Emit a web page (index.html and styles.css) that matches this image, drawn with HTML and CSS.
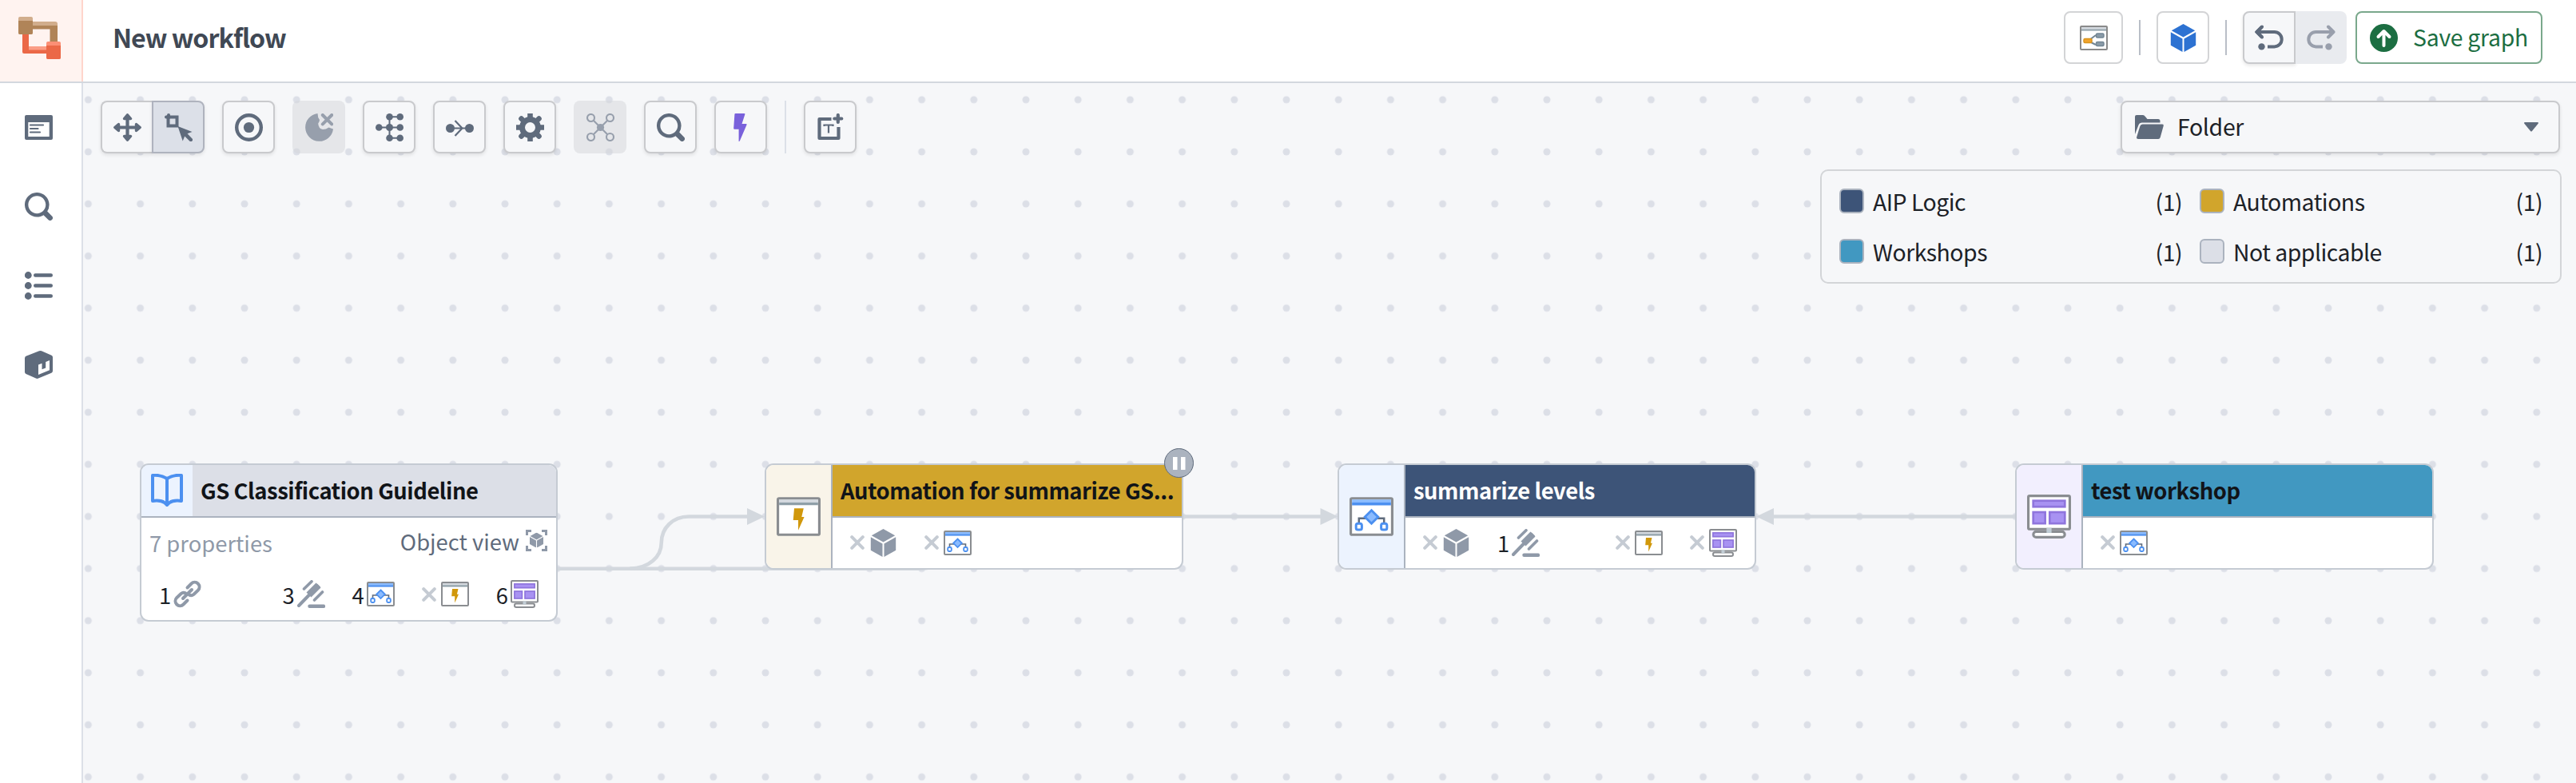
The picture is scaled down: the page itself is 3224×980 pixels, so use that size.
FILE: index.html
```html
<!DOCTYPE html>
<html lang="en">

<head>
    <meta charset="UTF-8">
    <meta name="viewport" content="width=device-width, initial-scale=1.0">
    <title>New workflow</title>
    <link rel="stylesheet" href="styles.css">
</head>

<body>
    <!-- icon sprite -->
    <svg class="sprite" width="0" height="0">
        <symbol id="i-search" viewBox="0 0 16 16">
            <path d="M15.55 13.43l-2.67-2.68a6.94 6.94 0 001.11-3.76c0-3.87-3.13-7-7-7s-7 3.13-7 7 3.13 7 7 7c1.39 0 2.68-.42 3.76-1.11l2.68 2.67a1.498 1.498 0 102.12-2.12zm-8.56-1.44c-2.76 0-5-2.24-5-5s2.24-5 5-5 5 2.24 5 5-2.24 5-5 5z"/>
        </symbol>
        <symbol id="i-cube" viewBox="0 0 35 35">
            <path d="M17.5 0L32.2 8.2 17.5 16.6 2.8 8.2z"/>
            <path d="M1.8 10.2L16.5 18.6V35L1.8 26.8z"/>
            <path d="M33.2 10.2L18.5 18.6V35l14.7-8.2z"/>
        </symbol>
        <symbol id="i-x" viewBox="0 0 18 18">
            <path d="M2.2 2.2l13.6 13.6M15.8 2.2L2.2 15.8" fill="none" stroke="#c5cbd3" stroke-width="4" stroke-linecap="round"/>
        </symbol>
        <symbol id="i-gavel" viewBox="0 0 35 35">
            <g fill="none" stroke="#8f99a8" stroke-linecap="round">
                <path d="M2 32L17 16.500" stroke-width="4"/>
                <path d="M8.500 11L18 1.800M21.500 25L31.500 15" stroke-width="3.600"/>
                <path d="M15.500 32.800H33" stroke-width="4.400"/>
                <path d="M17.500 15.500L23.500 9.500" stroke-width="8.500" stroke-linecap="square"/>
                <path d="M24.500 6l3 3" stroke-width="3"/>
            </g>
        </symbol>
        <symbol id="i-link" viewBox="0 0 35 35">
            <g fill="none" stroke="#8f99a8" stroke-width="4" stroke-linecap="round">
                <path d="M17.500 9.500l5-5a5.800 5.800 0 0 1 8.300 8.300l-5.400 5.200q-2.500 2-5.500.6"/>
                <path d="M17.500 25.500l-5 5a5.800 5.800 0 0 1-8.300-8.300l5.400-5.200q2.500-2 5.500-.6"/>
                <path d="M12 23L23 12"/>
            </g>
        </symbol>
        <symbol id="i-logic" viewBox="0 0 35 31">
            <rect x="1" y="1" width="33" height="29" rx="1" fill="#fff" stroke="#8a8d91" stroke-width="2"/>
            <path d="M2 2h31v2.500H2z" fill="#8abbff"/>
            <path d="M2 4.300h31v2.300H2z" fill="#4c90f0"/>
            <path d="M7.500 21v-4h20v4" fill="none" stroke="#5f6b7c" stroke-width="1.600"/>
            <path d="M17.500 10.500l5.300 5.300-5.300 5.300-5.300-5.300z" fill="#8abbff" stroke="#4c90f0" stroke-width="1.800"/>
            <rect x="5.200" y="21" width="4.600" height="5" rx="1.500" fill="#fff" stroke="#4c90f0" stroke-width="1.900"/>
            <rect x="25.200" y="21" width="4.600" height="5" rx="1.500" fill="#fff" stroke="#4c90f0" stroke-width="1.900"/>
        </symbol>
        <symbol id="i-auto" viewBox="0 0 35 31">
            <rect x="1" y="1" width="33" height="29" rx="1" fill="#fff" stroke="#8a8d91" stroke-width="2"/>
            <path d="M2 2h31v2.500H2z" fill="#d3d8de"/>
            <path d="M2 4.300h31v2.200H2z" fill="#8f9fa8"/>
            <path d="M14 9h7.500l-1.600 6.800h2.100l-4.800 10.700v-8.200h-4z" fill="#d1980b"/>
        </symbol>
        <symbol id="i-shop" viewBox="0 0 35 35">
            <rect x="5" y="29.500" width="25" height="4.500" rx="2.200" fill="#fff" stroke="#8a8d91" stroke-width="2"/>
            <rect x="1" y="1" width="33" height="26.500" rx="1" fill="#fff" stroke="#8a8d91" stroke-width="2"/>
            <path d="M15.500 26.500h4v4h-4z" fill="#c1cdd5"/>
            <g fill="#a892f2" stroke="#8f75dd" stroke-width="1.700">
                <rect x="4.900" y="4.900" width="25.200" height="4.800"/>
                <rect x="4.900" y="14" width="9.500" height="9"/>
                <rect x="18" y="14" width="12.100" height="9"/>
            </g>
        </symbol>
    </svg>

    <header class="header">
        <div class="logo">
            <svg width="54" height="54" viewBox="0 0 54 54">
                <path d="M5 20h8v26H7a2 2 0 0 1-2-2z" fill="#eb6847"/>
                <path d="M13 37h24v5H13z" fill="#fb9d86"/>
                <path d="M7 41.500h30V46H7z" fill="#eb6847"/>
                <path d="M17 6h29a3 3 0 0 1 3 3v3H17z" fill="#d1ad8c"/>
                <path d="M17 11h32v26h-9.500V15.500H17z" fill="#b08458"/>
                <rect width="18" height="22" rx="2" fill="#d1ad8c"/>
                <path d="M0 5h18v15a2 2 0 0 1-2 2H2a2 2 0 0 1-2-2z" fill="#b08458"/>
                <rect x="35" y="31" width="18" height="22" rx="2" fill="#fb8f75"/>
                <path d="M35 36h18v15a2 2 0 0 1-2 2H37a2 2 0 0 1-2-2z" fill="#eb6847"/>
            </svg>
        </div>
        <h1 class="title">New workflow</h1>
        <div class="actions">
            <button class="action wide">
                <svg width="35" height="31" viewBox="0 0 35 31">
                    <rect x="1" y="1" width="33" height="29" rx="1" fill="#fff" stroke="#8a8a8a" stroke-width="2"/>
                    <path d="M2 2h31v2.500H2z" fill="#d3d8de"/>
                    <path d="M2 4.500h31v2H2z" fill="#8f9fa8"/>
                    <path d="M12 18l8-6M12 20l8 4" stroke="#738694" stroke-width="2"/>
                    <rect x="20.500" y="10" width="9.500" height="5" rx="1.500" fill="#8a9ba8" stroke="#738694" stroke-width="1.500"/>
                    <rect x="20.500" y="20.500" width="9.500" height="5" rx="1.500" fill="#8a9ba8" stroke="#738694" stroke-width="1.500"/>
                    <rect x="5" y="16.500" width="10" height="5" rx="1.500" fill="#f2a42b" stroke="#d9941f" stroke-width="1.500"/>
                </svg>
            </button>
            <span class="sep"></span>
            <button class="action blue"><svg width="35" height="35"><use href="#i-cube"/></svg></button>
            <span class="sep"></span>
            <div class="history">
                <button class="undo">
                    <svg width="36" height="32" viewBox="0 0 36 32">
                        <path d="M9 2.500L2.500 9 9 15.500M3 9h21.500a9.200 9.200 0 0 1 0 18.400H16" fill="none" stroke="currentColor" stroke-width="4"/>
                        <path d="M9 2.500L2.500 9 9 15.500" fill="none" stroke="currentColor" stroke-width="4" stroke-linecap="round" stroke-linejoin="round"/>
                        <circle cx="8.500" cy="27.400" r="4.200"/>
                    </svg>
                </button>
                <button class="redo">
                    <svg width="36" height="32" viewBox="0 0 36 32">
                        <path d="M33 9H11.500a9.200 9.200 0 0 0 0 18.400H20" fill="none" stroke="currentColor" stroke-width="4"/>
                        <path d="M27 2.500L33.500 9 27 15.500" fill="none" stroke="currentColor" stroke-width="4" stroke-linecap="round" stroke-linejoin="round"/>
                        <circle cx="27.500" cy="27.400" r="4.200"/>
                    </svg>
                </button>
            </div>
            <button class="save">
                <svg width="35" height="35" viewBox="0 0 35 35">
                    <circle cx="17.500" cy="17.500" r="17.500" fill="#1c6e42"/>
                    <path d="M17.500 27V9.500M10.500 16l7-7 7 7" fill="none" stroke="#fff" stroke-width="4" stroke-linecap="round" stroke-linejoin="round"/>
                </svg>
                <span>Save graph</span>
            </button>
        </div>
    </header>

    <div class="main">
        <nav class="sidebar">
            <svg width="35" height="35" viewBox="0 0 35 35">
                <path d="M2 2h31a2 2 0 0 1 2 2v27a2 2 0 0 1-2 2H2a2 2 0 0 1-2-2V4a2 2 0 0 1 2-2zm2.300 9v18h26.400V11z" fill-rule="evenodd"/>
                <path d="M7 14.500h16M7 19h9.500M7 23.500h12" stroke="#5f6b7c" stroke-width="2.200" stroke-linecap="round"/>
            </svg>
            <svg width="35" height="35"><use href="#i-search"/></svg>
            <svg width="35" height="35" viewBox="0 0 35 35">
                <circle cx="4.300" cy="4.500" r="4.400"/><circle cx="4.300" cy="17.500" r="4.400"/><circle cx="4.300" cy="30.500" r="4.400"/>
                <path d="M13.200 4.500h19.600M13.200 17.500h19.600M13.200 30.500h19.600" stroke="#5f6b7c" stroke-width="4.400" stroke-linecap="round"/>
            </svg>
            <svg width="35" height="35" viewBox="0 0 35 35">
                <path d="M18 .3q1.500-.6 3 0l12.500 5.400Q35 6.500 35 8v17q0 2-1.600 2.800L17 34.600q-1.500.6-3 0L1.500 29Q0 28 0 26.500V9.500Q0 7.500 1.500 6.800z"/>
                <path d="M17 17.500l4.500-1.800v7.600l4.700-1.900v-7.500l4.800-1.900v12.300L17 30z" fill="#fff"/>
            </svg>
        </nav>

        <div class="canvas">
            <svg class="backdrop" width="3120" height="876" viewBox="104 104 3120 876">
                <defs>
                    <pattern id="dots" x="77.800" y="92.200" width="65.200" height="65.200" patternUnits="userSpaceOnUse">
                        <circle cx="32.600" cy="32.600" r="4.500" fill="#dcdfe7"/>
                    </pattern>
                </defs>
                <rect x="104" y="104" width="3120" height="876" fill="url(#dots)"/>
                <g fill="none" stroke="#d3d8de" stroke-width="4.600">
                    <path d="M698 711.700H1150C1180 711.700 1195 690 1195 679S1210 646.500 1240 646.500H1654"/>
                    <path d="M788 711.700C812 711.700 827.800 697 827.800 679S842 646.500 862 646.500H937"/>
                    <path d="M2522 646.500H2220"/>
                </g>
                <path d="M935 636l22 10.500-22 10.500zM1652.500 636l22 10.500-22 10.500zM2220 636l-22 10.500 22 10.500z" fill="#d3d8de"/>
            </svg>

            <div class="toolbar">
                <div class="tools">
                    <div class="group">
                        <button class="tool first">
                            <svg width="35" height="35" viewBox="0 0 35 35">
                                <path d="M17.500 3v29M3 17.500h29" stroke="currentColor" stroke-width="4.200"/>
                                <path d="M17.500 1.800l4 4.700h-8zM17.500 33.200l4-4.700h-8zM1.800 17.500l4.700-4v8zM33.200 17.500l-4.700-4v8z" stroke="currentColor" stroke-width="3.400" stroke-linejoin="round"/>
                            </svg>
                        </button>
                        <button class="tool last active">
                            <svg width="35" height="35" viewBox="0 0 35 35">
                                <path d="M4.500 4.500h11v11h-11z" fill="none" stroke="currentColor" stroke-width="4"/>
                                <path d="M2 4.500h3V2" fill="none" stroke="currentColor" stroke-width="4" stroke-linecap="round"/>
                                <path d="M16.500 16l18 7-6 2.300 6 6.200a2.200 2.200 0 0 1-3 3.200l-6.300-6.200-2.500 6z"/>
                            </svg>
                        </button>
                    </div>
                    <button class="tool">
                        <svg width="35" height="35" viewBox="0 0 35 35">
                            <circle cx="17.500" cy="17.500" r="15.300" fill="none" stroke="currentColor" stroke-width="4.400"/>
                            <circle cx="17.500" cy="17.500" r="6.600"/>
                        </svg>
                    </button>
                    <button class="tool disabled">
                        <svg width="35" height="35" viewBox="0 0 35 35">
                            <path d="M15.500 0A17.500 17.500 0 1 0 35 19.500q-3-.8-5.500-2Q26 20 22 20q-5.500-1-5.800-7.500 1.800-2 1.800-4.500-2.500-3-2.500-8z"/>
                            <path d="M21.800 2l11.400 11.400M33.200 2L21.800 13.400" stroke="currentColor" stroke-width="4" stroke-linecap="round"/>
                        </svg>
                    </button>
                    <button class="tool">
                        <svg width="35" height="35" viewBox="0 0 35 35">
                            <path d="M4 17.500h27M31 4.300H17.500v26.400H31" fill="none" stroke="currentColor" stroke-width="2"/>
                            <circle cx="4.300" cy="17.500" r="4.300"/><circle cx="17.500" cy="17.500" r="4.500"/><circle cx="30.700" cy="17.500" r="4.300"/>
                            <circle cx="17.500" cy="4.300" r="4.300"/><circle cx="30.700" cy="4.300" r="4.300"/>
                            <circle cx="17.500" cy="30.700" r="4.300"/><circle cx="30.700" cy="30.700" r="4.300"/>
                        </svg>
                    </button>
                    <button class="tool">
                        <svg width="35" height="35" viewBox="0 0 35 35">
                            <path d="M5 18.500h25M11.500 9l9 9.500-9 9.500" fill="none" stroke="currentColor" stroke-width="2.200"/>
                            <circle cx="5.500" cy="18.500" r="5.500"/><circle cx="29.500" cy="18.500" r="5.500"/>
                        </svg>
                    </button>
                    <button class="tool">
                        <svg width="35" height="35" viewBox="0 0 35 35">
                            <circle cx="17.500" cy="17.500" r="10" fill="none" stroke="currentColor" stroke-width="7"/>
                            <g stroke="currentColor" stroke-width="6.600" stroke-linejoin="round">
                                <path d="M17.500 0v7M17.500 28v7M0 17.500h7M28 17.500h7"/>
                                <path d="M6.500 6.500l3 3M28.500 6.500l-3 3M6.500 28.500l3-3M28.500 28.500l-3-3" stroke-linecap="round"/>
                            </g>
                        </svg>
                    </button>
                    <button class="tool disabled">
                        <svg width="35" height="35" viewBox="0 0 35 35">
                            <g fill="none" stroke="currentColor" stroke-width="2.100">
                                <path d="M9 9l17 17M26 9L9 26"/>
                                <circle cx="5.500" cy="5.500" r="4.500"/><circle cx="29.500" cy="5.500" r="4.500"/>
                                <circle cx="5.500" cy="29.500" r="4.500"/><circle cx="29.500" cy="29.500" r="4.500"/>
                            </g>
                            <circle cx="17.500" cy="17.500" r="4.600"/>
                        </svg>
                    </button>
                    <button class="tool"><svg width="35" height="35"><use href="#i-search"/></svg></button>
                    <button class="tool purple">
                        <svg width="35" height="35" viewBox="0 0 35 35">
                            <path d="M10.500 0h11q1.200 0 .8 1.200L18.500 13h5.300q1.200 0 .7 1.300L16 34q-.6 1.200-1.400 1V19.700H9q-1-.2-.8-1.200L9.400 1q.1-1 1.100-1z"/>
                        </svg>
                    </button>
                    <span class="toolsep"></span>
                    <button class="tool">
                        <svg width="35" height="35" viewBox="0 0 35 35">
                            <path d="M18.500 7H3.500v24h24V17" fill="none" stroke="currentColor" stroke-width="4.200" stroke-linejoin="round"/>
                            <path d="M26.800 2v9M22.300 6.500h9" stroke="currentColor" stroke-width="4.200" stroke-linecap="round"/>
                            <path d="M9.500 16V14.500h11V16M15 14.500V24.500" fill="none" stroke="currentColor" stroke-width="2.200"/>
                        </svg>
                    </button>
                </div>

                <div class="panel">
                    <div class="select">
                        <svg width="36" height="30" viewBox="0 0 36 30">
                            <path d="M0 24V2q0-2 2-2h8q1.500 0 3 2l2.500 3H29q2.500 0 2.500 2.500V9.500H8.500q-3 0-3.800 2.500z"/>
                            <path d="M9.500 11.500H34q2.200 0 1.700 2L31.700 28q-.6 2-2.500 2H4q-2.500 0-1.900-2.200L6.300 14q.8-2.500 3.200-2.500z"/>
                        </svg>
                        <span>Folder</span>
                        <svg class="caret" width="18" height="12" viewBox="0 0 18 12"><path d="M1 0h16q1.500.3.600 1.700L10 11q-1 1-2 0L.4 1.700Q-.5.300 1 0z"/></svg>
                    </div>
                    <div class="legend">
                        <div class="item"><i class="swatch navy"></i>AIP Logic<span>(1)</span></div>
                        <div class="item"><i class="swatch gold"></i>Automations<span>(1)</span></div>
                        <div class="item"><i class="swatch teal"></i>Workshops<span>(1)</span></div>
                        <div class="item"><i class="swatch grey"></i>Not applicable<span>(1)</span></div>
                    </div>
                </div>
            </div>

            <div class="node object">
                <div class="node-head">
                    <div class="book">
                        <svg width="40" height="42" viewBox="0 0 40 42">
                            <path d="M20 6Q12 1 2 2v32q10-1.500 15.500 2.500L20 39l2.500-2.500Q28 32.500 38 34V2Q28 1 20 6zM20 6v32" fill="none" stroke="#4c90f0" stroke-width="4" stroke-linejoin="round"/>
                        </svg>
                    </div>
                    <span class="name">GS Classification Guideline</span>
                </div>
                <div class="info">
                    <span class="props">7 properties</span>
                    <span class="view">Object view
                        <svg width="27" height="27" viewBox="0 0 27 27">
                            <path d="M1.500 7V1.500H7M20 1.500h5.500V7M25.500 20v5.500H20M7 25.500H1.500V20" fill="none" stroke="#8f99a8" stroke-width="3"/>
                            <svg x="4" y="3.500" width="19" height="19" fill="#8f99a8"><use href="#i-cube"/></svg>
                        </svg>
                    </span>
                </div>
                <div class="stats">
                    <span class="stat">1<svg width="35" height="35"><use href="#i-link"/></svg></span>
                    <span class="stat push">3<svg width="35" height="35"><use href="#i-gavel"/></svg></span>
                    <span class="stat">4<svg width="35" height="31"><use href="#i-logic"/></svg></span>
                    <span class="stat none"><svg width="18" height="18"><use href="#i-x"/></svg><svg width="35" height="31"><use href="#i-auto"/></svg></span>
                    <span class="stat">6<svg width="35" height="35"><use href="#i-shop"/></svg></span>
                </div>
            </div>

            <div class="node automation">
                <div class="side"><svg width="55" height="49"><use href="#i-auto"/></svg></div>
                <div class="content">
                    <div class="name">Automation for summarize GS...</div>
                    <div class="stats">
                        <span class="stat none"><svg width="18" height="18"><use href="#i-x"/></svg><svg width="35" height="35"><use href="#i-cube"/></svg></span>
                        <span class="stat none"><svg width="18" height="18"><use href="#i-x"/></svg><svg width="35" height="31"><use href="#i-logic"/></svg></span>
                    </div>
                </div>
                <div class="paused">
                    <svg width="16" height="16" viewBox="0 0 16 16"><path d="M0 0h5.500v16H0zM10 0h5.500v16H10z" fill="#fff"/></svg>
                </div>
            </div>

            <div class="node logic">
                <div class="side"><svg width="55" height="49"><use href="#i-logic"/></svg></div>
                <div class="content">
                    <div class="name">summarize levels</div>
                    <div class="stats">
                        <span class="stat none"><svg width="18" height="18"><use href="#i-x"/></svg><svg width="35" height="35"><use href="#i-cube"/></svg></span>
                        <span class="stat">1<svg width="35" height="35"><use href="#i-gavel"/></svg></span>
                        <span class="stat none push"><svg width="18" height="18"><use href="#i-x"/></svg><svg width="35" height="31"><use href="#i-auto"/></svg></span>
                        <span class="stat none"><svg width="18" height="18"><use href="#i-x"/></svg><svg width="35" height="35"><use href="#i-shop"/></svg></span>
                    </div>
                </div>
            </div>

            <div class="node workshop">
                <div class="side"><svg width="55" height="55"><use href="#i-shop"/></svg></div>
                <div class="content">
                    <div class="name">test workshop</div>
                    <div class="stats">
                        <span class="stat none"><svg width="18" height="18"><use href="#i-x"/></svg><svg width="35" height="31"><use href="#i-logic"/></svg></span>
                    </div>
                </div>
            </div>
        </div>
    </div>
</body>

</html>
```
FILE: styles.css
```css
* {
    box-sizing: border-box;
}

body {
    margin: 0;
    height: 980px;
    display: flex;
    flex-direction: column;
    overflow: hidden;
    font-family: "Noto Sans CJK SC", "Noto Sans", sans-serif;
    font-size: 28.4px;
    letter-spacing: -0.3px;
    color: #1c2127;
    background: #f6f7f9;
}

svg {
    display: block;
    flex: none;
}

.sprite {
    position: absolute;
}

button {
    display: flex;
    align-items: center;
    justify-content: center;
    padding: 0;
    font: inherit;
    letter-spacing: inherit;
    color: inherit;
    background: none;
    border: none;
}

button svg {
    fill: currentColor;
}

/* header */
.header {
    display: flex;
    align-items: center;
    height: 104px;
    background: #fff;
    border-bottom: 2px solid #d3d8de;
}

.logo {
    width: 104px;
    height: 102px;
    padding: 21px 0 0 23px;
    background: #fff3f0;
    border-right: 2px solid #ffd5cc;
}

.title {
    margin: 0 0 10px 37px;
    font-size: 32.2px;
    line-height: 48px;
    font-weight: 600;
    letter-spacing: -1px;
    color: #404854;
}

.actions {
    display: flex;
    align-items: center;
    margin-left: auto;
    padding: 0 42px 8px 0;
}

.action {
    width: 66px;
    height: 66px;
    border: 2px solid #d3d4d6;
    border-radius: 8px;
}

.action.wide {
    width: 74px;
}

.blue {
    color: #2d72d2;
}

.sep {
    width: 2px;
    height: 44px;
    margin: 0 20px;
    background: #b9bec7;
}

.history {
    display: flex;
    margin-right: 11px;
}

.undo,
.redo {
    width: 66px;
    height: 66px;
    color: #5f6b7c;
}

.undo {
    background: #f6f7f9;
    border: 2px solid #c9cacd;
    border-radius: 8px 0 0 8px;
    box-shadow: 0 2px 4px rgba(17, 20, 24, 0.1);
}

.redo {
    width: 64px;
    color: #999fac;
    background: #e9ebef;
    border-radius: 0 8px 8px 0;
}

.save {
    width: 234px;
    height: 66px;
    gap: 19px;
    color: #1c6e42;
    border: 2px solid #7aa88c;
    border-radius: 8px;
}

.save span {
    margin-top: -2px;
    line-height: 40px;
}

/* left rail */
.main {
    display: flex;
    flex: 1;
}

.sidebar {
    display: flex;
    flex-direction: column;
    gap: 64px;
    width: 104px;
    padding: 38px 0 0 31px;
    background: #fff;
    border-right: 2px solid #dce0e8;
    fill: #5f6b7c;
}

/* canvas */
.canvas {
    position: relative;
    flex: 1;
    overflow: hidden;
}

.backdrop {
    position: absolute;
    top: 0;
    left: 0;
}

.toolbar {
    position: relative;
    display: flex;
    justify-content: space-between;
    padding: 22px 18px 0 22px;
}

.tools {
    display: flex;
    gap: 22px;
    height: 66px;
}

.group {
    display: flex;
}

.tool {
    width: 66px;
    height: 66px;
    color: #5f6b7c;
    background: #f6f7f9;
    border: 2px solid #c9cacd;
    border-radius: 8px;
    box-shadow: 0 2px 4px rgba(17, 20, 24, 0.1);
}

.tool.first {
    border-right: none;
    border-radius: 8px 0 0 8px;
    width: 64px;
}

.tool.last {
    border-radius: 0 8px 8px 0;
}

.tool.active {
    background: #dce0e8;
    border-color: #afb3be;
}

.tool.disabled {
    color: #979fac;
    background: rgba(211, 213, 218, 0.5);
    border-color: transparent;
    box-shadow: none;
}

.tool.purple {
    color: #7961db;
}

.toolsep {
    width: 2px;
    background: #dce0e8;
}

.panel {
    display: flex;
    flex-direction: column;
    align-items: flex-end;
    gap: 20px;
}

.select {
    display: flex;
    align-items: center;
    width: 550px;
    height: 66px;
    margin-right: 2px;
    padding: 0 25px 0 16px;
    background: #f6f7f9;
    border: 2px solid #c9cacd;
    border-radius: 8px;
    box-shadow: 0 2px 4px rgba(17, 20, 24, 0.1);
    fill: #5f6b7c;
}

.select span {
    margin: -3px auto 0 17px;
    line-height: 40px;
}

.legend {
    display: grid;
    grid-template-columns: 1fr 1fr;
    column-gap: 22px;
    width: 928px;
    height: 143px;
    padding: 6px 22px 7px;
    background: #f6f7f9;
    border: 2px solid #d3d5d8;
    border-radius: 10px;
    letter-spacing: -0.5px;
}

.item {
    display: flex;
    align-items: center;
    line-height: 40px;
}

.item span {
    margin-left: auto;
}

.swatch {
    width: 31px;
    height: 31px;
    margin-right: 11px;
    border: 2px solid #abb3bf;
    border-radius: 6px;
}

.navy {
    background: #3d5478;
}

.gold {
    background: #d1a52c;
}

.teal {
    background: #4198c1;
}

.grey {
    background: #dcdfe7;
}

/* graph nodes */
.node {
    position: absolute;
    top: 476px;
    display: flex;
    width: 524px;
    height: 133px;
    font-size: 27.4px;
    letter-spacing: 0;
    background: #fff;
    border: 2px solid #c5cbd3;
    border-radius: 11px;
}

.object {
    left: 71px;
    width: 523px;
    height: 198px;
    flex-direction: column;
}

.automation {
    left: 853px;
}

.logic {
    left: 1570px;
}

.workshop {
    left: 2418px;
}

.node-head {
    display: flex;
    height: 66px;
    background: #dcdfe7;
    border-bottom: 2px solid #abb3bf;
    border-radius: 9px 9px 0 0;
}

.book {
    display: flex;
    align-items: center;
    justify-content: center;
    width: 64px;
    background: #ecf3fe;
    border-radius: 9px 0 0 0;
}

.name {
    height: 66px;
    padding: 0 7px 0 10px;
    line-height: 63px;
    font-weight: 600;
    letter-spacing: -0.45px;
    color: #111418;
    white-space: nowrap;
}

.info {
    display: flex;
    justify-content: space-between;
    height: 64px;
    padding: 0 11px 0 10px;
    line-height: 60px;
    color: #8f99a8;
}

.props {
    padding-top: 1px;
}

.view {
    display: flex;
    align-items: center;
    gap: 8px;
    height: 57px;
    color: #5f6b7c;
}

.stats {
    display: flex;
    align-items: center;
    gap: 34px;
    flex: 1;
    height: 64px;
    padding: 0 22px 1px;
    fill: #8f99a8;
}

.stat {
    display: flex;
    align-items: center;
    gap: 3px;
    line-height: 40px;
}

.stat.none {
    gap: 6px;
}

.push {
    margin-left: auto;
}

.side {
    display: flex;
    align-items: center;
    justify-content: center;
    width: 83px;
    border-right: 2px solid #abb3bf;
    border-radius: 9px 0 0 9px;
}

.content {
    display: flex;
    flex-direction: column;
    width: 437px;
}

.content .name {
    border-bottom: 2px solid #abb3bf;
    border-radius: 0 9px 0 0;
}

.automation .side {
    background: #f9f4e9;
}

.automation .name {
    background: #d1a52c;
}

.logic .side {
    background: #ecf3fe;
}

.logic .name {
    color: #fff;
    background: #3d5478;
}

.workshop .side {
    background: #f2effe;
}

.workshop .name {
    background: #4198c1;
}

.paused {
    position: absolute;
    top: -21px;
    right: -15px;
    display: flex;
    align-items: center;
    justify-content: center;
    width: 37px;
    height: 37px;
    background: #abb3bf;
    border: 1.5px solid #5f6b7c;
    border-radius: 50%;
}
```
